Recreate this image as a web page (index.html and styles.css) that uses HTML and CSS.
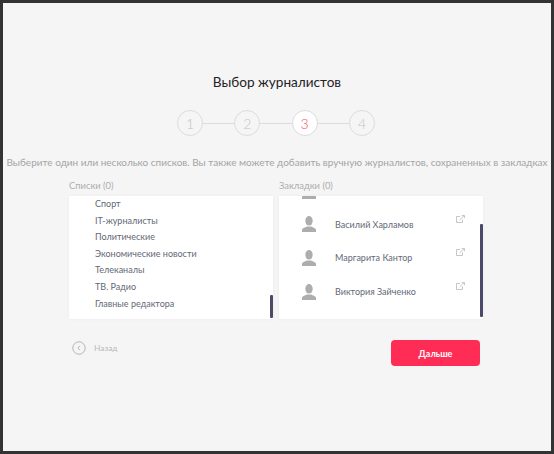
FILE: index.html
```html
<!DOCTYPE html>
<html lang="ru">
<head>
<meta charset="utf-8">
<title>Выбор журналистов</title>
<link rel="stylesheet" href="styles.css">
</head>
<body>
<main class="frame">
  <h1 class="title">Выбор журналистов</h1>
  <ol class="steps">
    <li class="step">1</li><li class="link"></li>
    <li class="step">2</li><li class="link"></li>
    <li class="step active">3</li><li class="link"></li>
    <li class="step">4</li>
  </ol>
  <p class="desc">Выберите один или несколько списков. Вы также можете добавить вручную журналистов, сохраненных в закладках</p>
  <div class="columns">
    <section class="col">
      <h2 class="label">Списки (0)</h2>
      <div class="panel">
        <ul class="lists">
          <li>Спорт</li>
          <li>IT-журналисты</li>
          <li>Политические</li>
          <li>Экономические новости</li>
          <li>Телеканалы</li>
          <li>ТВ. Радио</li>
          <li>Главные редактора</li>
        </ul>
        <span class="thumb thumb-left"></span>
      </div>
    </section>
    <section class="col">
      <h2 class="label">Закладки (0)</h2>
      <div class="panel">
        <ul class="people">
          <li class="person">
            <svg class="avatar" viewBox="0 0 14 16"><ellipse cx="7" cy="4.8" rx="3.7" ry="4.8"/><path d="M0 16v-2c0-1.8 3.2-2.4 5-3.4h4c1.8 1 5 1.6 5 3.4v2z"/></svg>
          </li>
          <li class="person">
            <svg class="avatar" viewBox="0 0 14 16"><ellipse cx="7" cy="4.8" rx="3.7" ry="4.8"/><path d="M0 16v-2c0-1.8 3.2-2.4 5-3.4h4c1.8 1 5 1.6 5 3.4v2z"/></svg>
            <span class="name">Василий Харламов</span>
            <svg class="ext" viewBox="0 0 9 8"><path d="M6.5 4.5v3h-6v-6h3.5M3.5 5L8 .8M5.7.5H8.5v2.7"/></svg>
          </li>
          <li class="person">
            <svg class="avatar" viewBox="0 0 14 16"><ellipse cx="7" cy="4.8" rx="3.7" ry="4.8"/><path d="M0 16v-2c0-1.8 3.2-2.4 5-3.4h4c1.8 1 5 1.6 5 3.4v2z"/></svg>
            <span class="name">Маргарита Кантор</span>
            <svg class="ext" viewBox="0 0 9 8"><path d="M6.5 4.5v3h-6v-6h3.5M3.5 5L8 .8M5.7.5H8.5v2.7"/></svg>
          </li>
          <li class="person">
            <svg class="avatar" viewBox="0 0 14 16"><ellipse cx="7" cy="4.8" rx="3.7" ry="4.8"/><path d="M0 16v-2c0-1.8 3.2-2.4 5-3.4h4c1.8 1 5 1.6 5 3.4v2z"/></svg>
            <span class="name">Виктория Зайченко</span>
            <svg class="ext" viewBox="0 0 9 8"><path d="M6.5 4.5v3h-6v-6h3.5M3.5 5L8 .8M5.7.5H8.5v2.7"/></svg>
          </li>
        </ul>
        <span class="thumb thumb-right"></span>
      </div>
    </section>
  </div>
  <div class="actions">
    <a class="back">
      <svg class="back-icon" viewBox="0 0 14 14"><circle cx="7" cy="7" r="6.2"/><path d="M8 4.8L5.8 7 8 9.2"/></svg>
      <span>Назад</span>
    </a>
    <button class="next">Дальше</button>
  </div>
</main>
</body>
</html>
```
FILE: styles.css
```css
* { box-sizing: border-box; }
html, body { margin: 0; height: 100%; }
body { font-family: "Lato", "Open Sans", sans-serif; }
ul, ol { list-style: none; margin: 0; padding: 0; }

.frame {
  width: 554px;
  height: 454px;
  border: 3px solid #333;
  background: #f5f5f5;
  padding-top: 70px;
  overflow: hidden;
}
.title {
  margin: 0;
  height: 18px;
  font-size: 13.6px;
  line-height: 18px;
  font-weight: 400;
  text-align: center;
  color: #1f2227;
}
.steps {
  display: flex;
  align-items: center;
  justify-content: center;
  margin: 19px 0 0 0;
  padding-right: 2px;
}
.step {
  width: 26px;
  height: 26px;
  border: 1px solid #dcdcdc;
  border-radius: 50%;
  display: flex;
  align-items: center;
  justify-content: center;
  font-size: 14px;
  font-weight: 300;
  color: #c4c4c4;
  background: #f5f5f5;
}
.step.active { background: #fff; color: #ff4d66; }
.link { width: 31.3px; height: 1px; background: #dcdcdc; }
.desc {
  margin: 19px 0 0 0;
  height: 14px;
  font-size: 10px;
  line-height: 14px;
  white-space: nowrap;
  text-align: center;
  color: #a4a4a4;
}
.columns {
  display: flex;
  gap: 6px;
  margin: 10px 0 0 66px;
}
.col { width: 204px; }
.label {
  margin: 0;
  height: 13px;
  font-size: 9.4px;
  line-height: 13px;
  font-weight: 400;
  color: #adadad;
}
.panel {
  position: relative;
  margin-top: 4px;
  height: 123px;
  background: #fff;
  overflow: hidden;
  box-shadow: 0 0 3px rgba(0, 0, 0, .05);
}
.lists { padding: 0 0 0 26px; }
.lists li {
  height: 16.6px;
  font-size: 9px;
  line-height: 16.6px;
  color: #636875;
}
.people { margin-top: -22px; }
.person {
  position: relative;
  display: flex;
  align-items: center;
  height: 33.6px;
  padding-left: 23px;
  color: #636875;
}
.avatar { width: 14px; height: 16px; fill: #adadad; flex: none; }
.name { margin-left: 19px; font-size: 9px; }
.ext {
  position: absolute;
  left: 177px;
  top: 7px;
  width: 9px;
  height: 8px;
  fill: none;
  stroke: #c0c0c0;
  stroke-width: .9;
}
.thumb {
  position: absolute;
  right: 0;
  width: 3px;
  background: #4b4a68;
  border-radius: 1px;
}
.thumb-left { top: 99px; height: 23px; }
.thumb-right { top: 28px; height: 93px; }
.actions {
  display: flex;
  justify-content: space-between;
  align-items: flex-start;
  margin: 21px 0 0 69px;
  width: 408px;
}
.back {
  display: flex;
  align-items: center;
  gap: 8px;
  margin-top: 1px;
  font-size: 8.4px;
  color: #b9b9b9;
}
.back-icon {
  width: 14px;
  height: 14px;
  fill: none;
  stroke: #b4b4b4;
  stroke-width: 1;
}
.next {
  width: 89px;
  height: 26px;
  border: 0;
  border-radius: 4px;
  background: #ff2d55;
  color: #fff;
  font: 700 9px "Lato", sans-serif;
}
```
